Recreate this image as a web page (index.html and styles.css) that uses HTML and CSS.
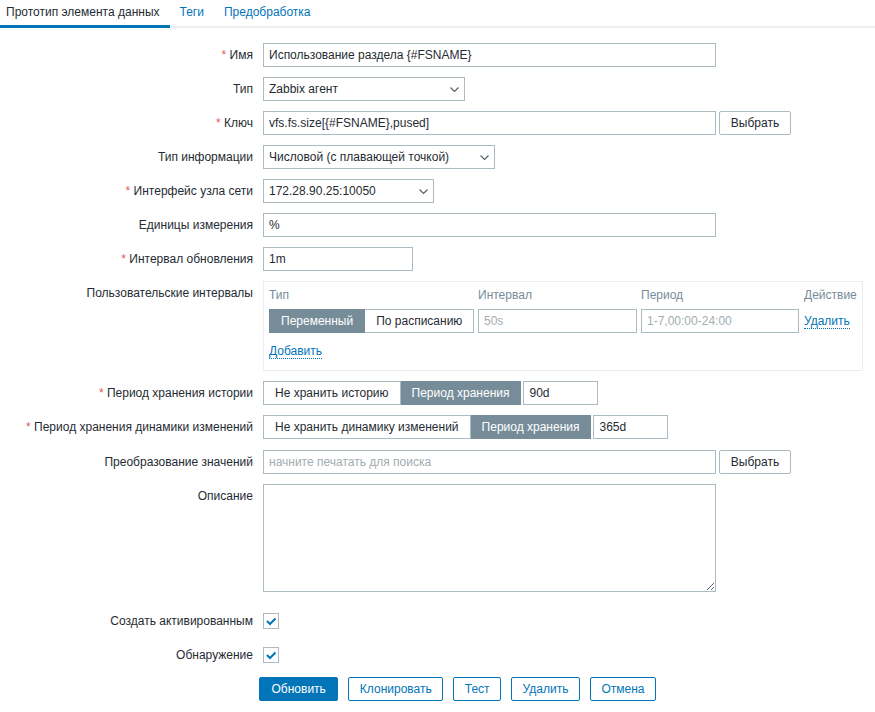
FILE: index.html
```html
<!DOCTYPE html>
<html lang="ru">
<head>
    <meta charset="UTF-8">
    <title>Прототип элемента данных</title>
    <link rel="stylesheet" href="styles.css">
</head>
<body>
<ul class="tabs">
    <li class="tab active">Прототип элемента данных</li>
    <li class="tab">Теги</li>
    <li class="tab">Предобработка</li>
</ul>

<form class="item-form">
    <div class="form-row">
        <label class="form-label"><span class="req">*</span> Имя</label>
        <div class="form-field">
            <input class="input w-wide" type="text" value="Использование раздела {#FSNAME}">
        </div>
    </div>

    <div class="form-row">
        <label class="form-label">Тип</label>
        <div class="form-field">
            <div class="select w-type">
                <span>Zabbix агент</span>
                <svg class="chevron" width="9" height="5" viewBox="0 0 9 5"><path d="M0.5 0.5 L4.5 4.5 L8.5 0.5" fill="none" stroke="#555e63" stroke-width="1.1"/></svg>
            </div>
        </div>
    </div>

    <div class="form-row">
        <label class="form-label"><span class="req">*</span> Ключ</label>
        <div class="form-field">
            <input class="input w-wide" type="text" value="vfs.fs.size[{#FSNAME},pused]">
            <button class="btn-alt" type="button">Выбрать</button>
        </div>
    </div>

    <div class="form-row">
        <label class="form-label">Тип информации</label>
        <div class="form-field">
            <div class="select w-info">
                <span>Числовой (с плавающей точкой)</span>
                <svg class="chevron" width="9" height="5" viewBox="0 0 9 5"><path d="M0.5 0.5 L4.5 4.5 L8.5 0.5" fill="none" stroke="#555e63" stroke-width="1.1"/></svg>
            </div>
        </div>
    </div>

    <div class="form-row">
        <label class="form-label"><span class="req">*</span> Интерфейс узла сети</label>
        <div class="form-field">
            <div class="select w-iface">
                <span>172.28.90.25:10050</span>
                <svg class="chevron" width="9" height="5" viewBox="0 0 9 5"><path d="M0.5 0.5 L4.5 4.5 L8.5 0.5" fill="none" stroke="#555e63" stroke-width="1.1"/></svg>
            </div>
        </div>
    </div>

    <div class="form-row">
        <label class="form-label">Единицы измерения</label>
        <div class="form-field">
            <input class="input w-wide" type="text" value="%">
        </div>
    </div>

    <div class="form-row">
        <label class="form-label"><span class="req">*</span> Интервал обновления</label>
        <div class="form-field">
            <input class="input w-delay" type="text" value="1m">
        </div>
    </div>

    <div class="form-row">
        <label class="form-label">Пользовательские интервалы</label>
        <div class="form-field">
            <div class="intervals">
                <div class="intervals-grid">
                    <div class="col-head">Тип</div>
                    <div class="col-head">Интервал</div>
                    <div class="col-head">Период</div>
                    <div class="col-head">Действие</div>

                    <div class="radio-list">
                        <span class="radio on">Переменный</span>
                        <span class="radio">По расписанию</span>
                    </div>
                    <input class="input w-interval" type="text" placeholder="50s">
                    <input class="input w-period" type="text" placeholder="1-7,00:00-24:00">
                    <div><a class="link-action">Удалить</a></div>
                </div>
                <a class="link-action add-link">Добавить</a>
            </div>
        </div>
    </div>

    <div class="form-row">
        <label class="form-label"><span class="req">*</span> Период хранения истории</label>
        <div class="form-field gap-2">
            <div class="radio-list">
                <span class="radio">Не хранить историю</span>
                <span class="radio on">Период хранения</span>
            </div>
            <input class="input w-short" type="text" value="90d">
        </div>
    </div>

    <div class="form-row row-trends">
        <label class="form-label"><span class="req">*</span> Период хранения динамики изменений</label>
        <div class="form-field gap-2">
            <div class="radio-list">
                <span class="radio">Не хранить динамику изменений</span>
                <span class="radio on">Период хранения</span>
            </div>
            <input class="input w-short" type="text" value="365d">
        </div>
    </div>

    <div class="form-row">
        <label class="form-label">Преобразование значений</label>
        <div class="form-field">
            <input class="input w-wide" type="text" placeholder="начните печатать для поиска">
            <button class="btn-alt" type="button">Выбрать</button>
        </div>
    </div>

    <div class="form-row row-desc">
        <label class="form-label">Описание</label>
        <div class="form-field">
            <textarea class="textarea w-wide"></textarea>
        </div>
    </div>

    <div class="form-row row-check">
        <label class="form-label">Создать активированным</label>
        <div class="form-field">
            <span class="checkbox">
                <svg width="14" height="14" viewBox="0 0 14 14"><path d="M3 7 L6 10 L11.5 4.5" fill="none" stroke="#0275b8" stroke-width="2"/></svg>
            </span>
        </div>
    </div>

    <div class="form-row row-check">
        <label class="form-label">Обнаружение</label>
        <div class="form-field">
            <span class="checkbox">
                <svg width="14" height="14" viewBox="0 0 14 14"><path d="M3 7 L6 10 L11.5 4.5" fill="none" stroke="#0275b8" stroke-width="2"/></svg>
            </span>
        </div>
    </div>

    <div class="form-actions">
        <button class="btn-main" type="button">Обновить</button>
        <button class="btn-outline" type="button">Клонировать</button>
        <button class="btn-outline" type="button">Тест</button>
        <button class="btn-outline" type="button">Удалить</button>
        <button class="btn-outline" type="button">Отмена</button>
    </div>
</form>
</body>
</html>
```

FILE: styles.css
```css
:root {
    --text: #1f2c33;
    --link: #0275b8;
    --border: #acbbc2;
    --muted: #768d99;
    --light-line: #ebeef0;
    --required: #e45959;
    --placeholder: #a3adb2;
}

* {
    margin: 0;
    padding: 0;
    box-sizing: border-box;
}

body {
    font-family: Arial, "Liberation Sans", sans-serif;
    font-size: 12px;
    line-height: 14px;
    color: var(--text);
    background: #fff;
}

/* Tabs */
.tabs {
    display: flex;
    list-style: none;
    border-bottom: 2px solid var(--light-line);
}

.tab {
    height: 26px;
    padding: 5px 10px 0;
    color: var(--link);
}

.tab.active {
    height: 28px;
    padding-left: 6px;
    color: var(--text);
    border-bottom: 3px solid var(--link);
    margin-bottom: -2px;
}

/* Form layout */
.item-form {
    padding-top: 15px;
}

.form-row {
    display: flex;
    margin-bottom: 10px;
}

.form-label {
    width: 263px;
    flex-shrink: 0;
    padding: 5px 10px 0 0;
    text-align: right;
}

.req {
    color: var(--required);
}

.form-field {
    display: flex;
    align-items: flex-start;
    gap: 3px;
}

.form-field.gap-2 {
    gap: 2px;
}

/* Inputs */
.input,
.textarea,
.select {
    height: 24px;
    padding: 0 5px;
    border: 1px solid var(--border);
    background: #fff;
    font: inherit;
    color: var(--text);
    outline: none;
}

.input::placeholder {
    color: var(--placeholder);
}

.textarea {
    height: 108px;
    padding: 4px 5px;
    resize: vertical;
    display: block;
}

.select {
    display: flex;
    align-items: center;
    justify-content: space-between;
    padding-right: 5px;
}

.chevron {
    display: block;
}

.w-wide { width: 453px; }
.w-type { width: 202px; }
.w-info { width: 232px; }
.w-iface { width: 171px; }
.w-delay { width: 150px; }
.w-short { width: 75px; }
.w-interval { width: 159px; }
.w-period { width: 158px; }

/* Buttons */
button {
    height: 24px;
    font: inherit;
    cursor: pointer;
    border-radius: 2px;
}

.btn-alt {
    width: 72px;
    background: #fff;
    border: 1px solid var(--border);
    color: var(--text);
}

.btn-main {
    padding: 0 11.5px;
    background: var(--link);
    border: 1px solid var(--link);
    color: #fff;
}

.btn-outline {
    padding: 0 10.5px;
    background: #fff;
    border: 1px solid var(--link);
    color: var(--link);
}

/* Radio segments */
.radio-list {
    display: flex;
    height: 24px;
}

.radio {
    height: 24px;
    line-height: 22px;
    padding: 0 11px;
    border: 1px solid var(--border);
    background: #fff;
    white-space: nowrap;
}

.radio + .radio {
    border-left: none;
}

.radio.on {
    background: var(--muted);
    border-color: var(--muted);
    color: #fff;
}

/* Custom intervals */
.intervals {
    width: 600px;
    height: 90px;
    border: 1px solid var(--light-line);
    padding: 6px 5px 0;
}

.intervals-grid {
    display: grid;
    grid-template-columns: 209px 163px 163px auto;
    row-gap: 7px;
}

.col-head {
    color: var(--muted);
}

.intervals-grid > div:last-child {
    padding-top: 5px;
}

.link-action {
    color: var(--link);
    border-bottom: 1px dotted var(--link);
    cursor: pointer;
}

.add-link {
    display: inline-block;
    margin-top: 11px;
}

/* Trailing rows */
.row-trends {
    margin-bottom: 11px;
}

.row-desc {
    margin-bottom: 17px;
}

.row-check {
    height: 24px;
    align-items: center;
}

.row-check .form-label {
    padding-top: 0;
}

.row-check + .row-check {
    margin-bottom: 10px;
}

.checkbox {
    display: flex;
    align-items: center;
    justify-content: center;
    width: 16px;
    height: 16px;
    border: 1px solid var(--border);
    background: #fff;
}

.form-actions {
    display: flex;
    gap: 10px;
    padding-left: 259px;
}
```
